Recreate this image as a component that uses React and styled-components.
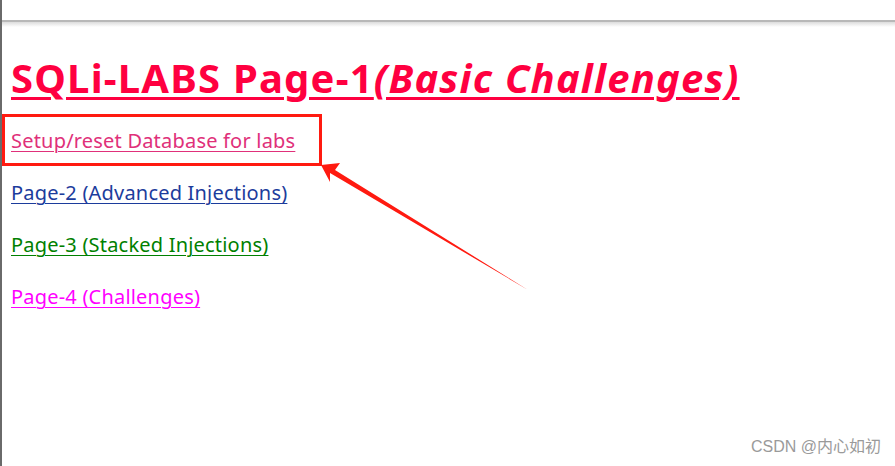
import React from 'react';
import styled, { createGlobalStyle } from 'styled-components';

const GlobalStyle = createGlobalStyle`
  html, body {
    margin: 0;
    padding: 0;
    background: #fff;
  }
  body {
    font-family: "Noto Sans", "Open Sans", sans-serif;
  }
`;

const Page = styled.div`
  position: relative;
  width: 895px;
  height: 466px;
  overflow: hidden;
  border-left: 2px solid #6a6a6a;
  box-sizing: border-box;
  background: #fff;
`;

const TopStrip = styled.div`
  height: 20px;
  border-bottom: 2px solid #b8b8b8;
`;

const Shadow = styled.div`
  height: 5px;
  background: linear-gradient(#dcdcdc, #fff);
`;

const Content = styled.div`
  padding: 0 0 0 9px;
`;

const Title = styled.h1`
  margin: 27px 0 0;
  font-size: 40px;
  font-weight: 700;
  line-height: 48px;
  color: #ff0040;
  text-decoration: underline;
  text-decoration-thickness: 3px;
  text-underline-offset: 4px;
  letter-spacing: 1.2px;
  white-space: nowrap;
`;

const Sub = styled.i`
  font-style: italic;
`;

const LinkList = styled.div`
  display: flex;
  flex-direction: column;
  align-items: flex-start;
  gap: 24px;
  margin-top: 25px;
`;

const Lnk = styled.a`
  font-size: 20px;
  line-height: 28px;
  letter-spacing: 0.2px;
  color: ${p => p.$color};
  text-decoration: underline;
  text-decoration-thickness: 1px;
  text-underline-offset: 3px;
`;

/* red annotation frame drawn round the first link */
const Highlight = styled.div`
  box-sizing: border-box;
  width: 320px;
  height: 52px;
  margin: -13px 0 -11px -9px;
  padding: 10px 0 0 6px;
  border: 3px solid #ff1a10;
`;

const Overlay = styled.svg`
  position: absolute;
  left: -2px;
  top: 0;
  pointer-events: none;
`;

const Watermark = styled.div`
  position: absolute;
  right: 14px;
  bottom: 9px;
  font-family: "Liberation Sans", "Noto Sans CJK SC", sans-serif;
  font-size: 16px;
  color: #9a9a9a;
`;

export default function App() {
  return (
    <>
      <GlobalStyle />
      <Page>
        <TopStrip />
        <Shadow />
        <Content>
          <Title>
            SQLi-LABS Page-1<Sub>(Basic Challenges)</Sub>
          </Title>
          <LinkList>
            <Highlight>
              <Lnk href="#" $color="#e0307a">Setup/reset Database for labs</Lnk>
            </Highlight>
            <Lnk href="#" $color="#1c3c9c">Page-2 (Advanced Injections)</Lnk>
            <Lnk href="#" $color="#008000">Page-3 (Stacked Injections)</Lnk>
            <Lnk href="#" $color="#ff00ff">Page-4 (Challenges)</Lnk>
          </LinkList>
        </Content>
        <Overlay width="895" height="466" viewBox="0 0 895 466">
          <path d="M321 165 L340 163 L335 170 L528 290 L330 173 L330 182 Z" fill="#ff1a10" />
        </Overlay>
        <Watermark>CSDN @内心如初</Watermark>
      </Page>
    </>
  );
}
